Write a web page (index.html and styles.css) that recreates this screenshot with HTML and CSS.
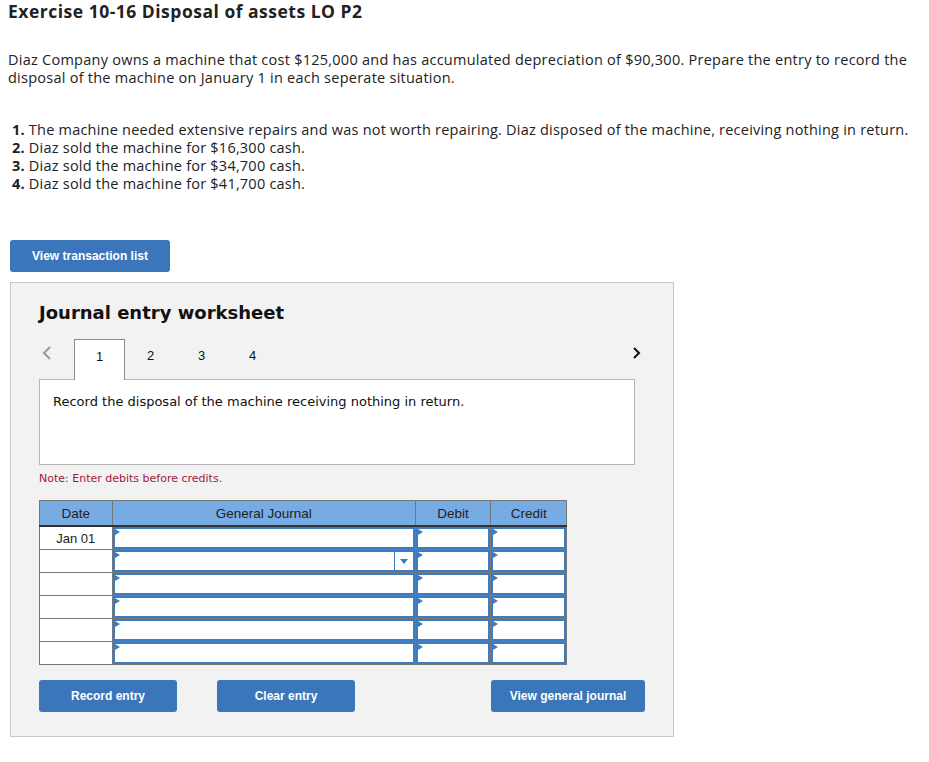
FILE: index.html
```html
<!DOCTYPE html>
<html lang="en">
<head>
  <meta charset="UTF-8" />
  <title>Exercise 10-16 Disposal of assets LO P2</title>
  <link rel="stylesheet" href="styles.css">
</head>
<body>
  <h1 class="title">Exercise 10-16 Disposal of assets LO P2</h1>

  <p class="intro">Diaz Company owns a machine that cost $125,000 and has accumulated depreciation of $90,300. Prepare the entry to record the disposal of the machine on January 1 in each seperate situation.</p>

  <ol class="cases">
    <li><b>1.</b> The machine needed extensive repairs and was not worth repairing. Diaz disposed of the machine, receiving nothing in return.</li>
    <li><b>2.</b> Diaz sold the machine for $16,300 cash.</li>
    <li><b>3.</b> Diaz sold the machine for $34,700 cash.</li>
    <li><b>4.</b> Diaz sold the machine for $41,700 cash.</li>
  </ol>

  <button class="btn btn-list">View transaction list</button>

  <div class="worksheet">
    <h2>Journal entry worksheet</h2>

    <div class="tabs">
      <span class="arrow prev">
        <svg width="10" height="14" viewBox="0 0 10 14"><path d="M8 1 L2 7 L8 13" fill="none" stroke="#9a9a9a" stroke-width="2"/></svg>
      </span>
      <span class="tab active">1</span>
      <span class="tab">2</span>
      <span class="tab">3</span>
      <span class="tab">4</span>
      <span class="arrow next">
        <svg width="10" height="14" viewBox="0 0 10 14"><path d="M2 2 L7 7 L2 12" fill="none" stroke="#111" stroke-width="2"/></svg>
      </span>
    </div>

    <div class="prompt">Record the disposal of the machine receiving nothing in return.</div>

    <p class="note">Note: Enter debits before credits.</p>

    <table class="journal">
      <thead>
        <tr>
          <th class="c-date">Date</th>
          <th class="c-acct">General Journal</th>
          <th class="c-num">Debit</th>
          <th class="c-num">Credit</th>
        </tr>
      </thead>
      <tbody id="rows"></tbody>
    </table>

    <div class="actions">
      <button class="btn">Record entry</button>
      <button class="btn">Clear entry</button>
      <button class="btn btn-journal">View general journal</button>
    </div>
  </div>

  <script>
    var rows = document.getElementById("rows");
    for (var i = 0; i < 6; i++) {
      var tr = document.createElement("tr");
      var date = i === 0 ? "Jan 01" : "";
      var acct = i === 1 ? '<div class="field select"><span class="caret"></span></div>' : '<div class="field"></div>';
      tr.innerHTML = '<td class="c-date">' + date + '</td>' +
        '<td>' + acct + '</td>' +
        '<td><div class="field"></div></td>' +
        '<td><div class="field"></div></td>';
      rows.appendChild(tr);
    }
  </script>
</body>
</html>
```

FILE: styles.css
```css
body {
  margin: 0;
  padding: 0 8px;
  font-family: "Open Sans", "Lato", sans-serif;
  color: #222;
  background: #fff;
}
.title {
  font-size: 17.5px;
  letter-spacing: 0.5px;
  line-height: 22px;
  margin: 0;
  font-weight: bold;
}
.intro {
  font-size: 14.5px;
  letter-spacing: 0.25px;
  line-height: 18px;
  margin: 29px 0 0;
}
.cases {
  list-style: none;
  margin: 34px 0 0;
  padding: 0 0 0 4px;
  font-size: 14.5px;
  letter-spacing: 0.22px;
  line-height: 18px;
}
.btn {
  display: inline-block;
  height: 32px;
  padding: 0;
  border: none;
  border-radius: 3px;
  background-color: #3a76b9;
  color: white;
  font-family: "Liberation Sans", Arial, sans-serif;
  font-weight: bold;
  font-size: 12px;
  width: 138px;
  cursor: pointer;
}
.btn-list {
  margin: 47px 0 0 2px;
  width: 160px;
}
.worksheet {
  margin: 10px 0 0 2px;
  width: 634px;
  padding: 20px 0 24px 28px;
  background-color: #f2f2f2;
  border: 1px solid #c8c8c8;
}
.worksheet h2 {
  font-family: "DejaVu Sans", Verdana, sans-serif;
  font-size: 18px;
  line-height: 20px;
  margin: 0;
  color: #111;
}
.tabs {
  display: flex;
  align-items: flex-start;
  margin-top: 16px;
  width: 606px;
  position: relative;
  z-index: 1;
  font-family: "Liberation Sans", Arial, sans-serif;
  font-size: 13px;
  color: #111;
}
.arrow {
  width: 35px;
  padding-top: 7px;
  box-sizing: border-box;
  padding-left: 3px;
}
.arrow.next {
  margin-left: auto;
  width: 16px;
}
.tab {
  width: 51px;
  height: 41px;
  box-sizing: border-box;
  text-align: center;
  padding-top: 9px;
  line-height: 16px;
}
.tab.active {
  background: white;
  border: 1px solid #8c8c8c;
  border-bottom: none;
}
.prompt {
  margin-top: -1px;
  width: 596px;
  height: 86px;
  box-sizing: border-box;
  padding: 14px 13px;
  background: white;
  border: 1px solid #b4b4b4;
  font-family: "DejaVu Sans", Verdana, sans-serif;
  font-size: 13px;
  line-height: 16px;
  color: #111;
}
.note {
  margin: 7px 0 14px;
  font-family: "DejaVu Sans", Verdana, sans-serif;
  font-size: 11px;
  line-height: 14px;
  color: #a3163f;
}
.journal {
  border-collapse: collapse;
  width: 528px;
  font-family: "Liberation Sans", Arial, sans-serif;
  font-size: 13px;
  background: white;
}
.journal th {
  background-color: #77abe4;
  height: 24px;
  font-weight: normal;
  font-size: 13.5px;
  color: #222;
  border: 1px solid #777;
  border-bottom: 2px solid #333;
  padding: 0;
}
.journal th + th {
  border-left: 1px solid #333;
}
.journal td {
  border: 1px solid #777;
  height: 22px;
  padding: 0;
}
.journal .c-date {
  width: 72px;
  text-align: center;
}
.journal .c-acct {
  width: 305px;
}
.journal .c-num {
  width: 75px;
}
.field {
  height: 22px;
  box-sizing: border-box;
  border: 2px solid #3f7bbf;
  position: relative;
}
.field::before {
  content: "";
  position: absolute;
  left: 0;
  top: 0;
  border-left: 5px solid #3f7bbf;
  border-top: 3px solid transparent;
  border-bottom: 3px solid transparent;
}
.select .caret {
  position: absolute;
  right: 0;
  top: 0;
  bottom: 0;
  width: 18px;
  border-left: 1px solid #3f7bbf;
}
.select .caret::after {
  content: "";
  position: absolute;
  left: 5px;
  top: 7px;
  border-top: 5px solid #3f7bbf;
  border-left: 4px solid transparent;
  border-right: 4px solid transparent;
}
.actions {
  margin-top: 15px;
  display: flex;
  gap: 40px;
}
.actions .btn-journal {
  width: 154px;
  margin-left: 96px;
}
```
